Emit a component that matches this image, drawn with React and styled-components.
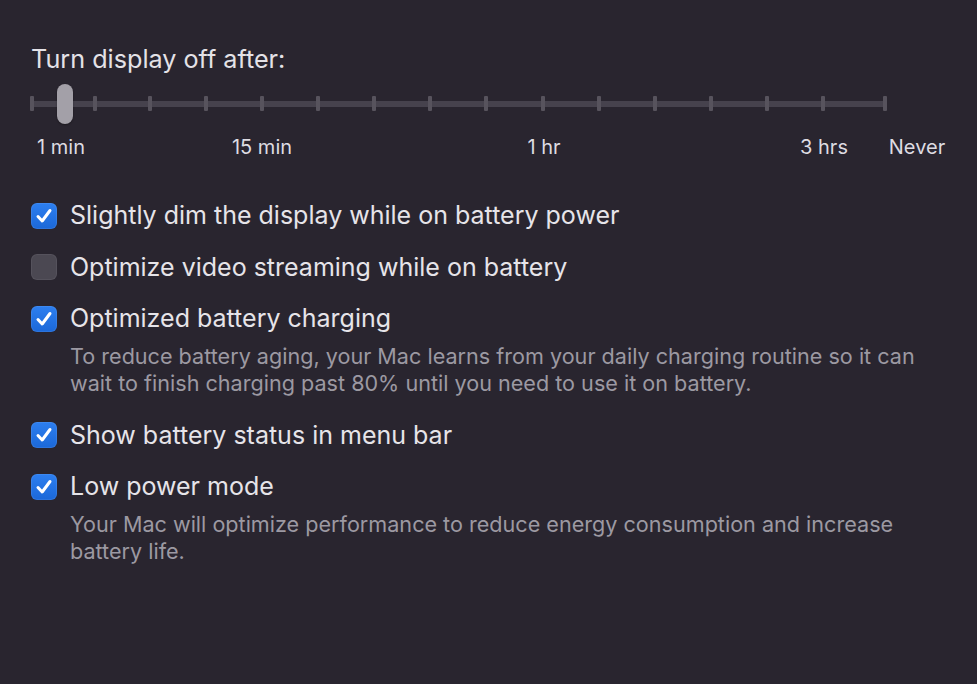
import React from "react";
import styled, { createGlobalStyle } from "styled-components";

const GlobalStyle = createGlobalStyle`
  html, body {
    margin: 0;
    padding: 0;
    background: #29252f;
  }
  body {
    font-family: Inter, "Noto Sans", "Liberation Sans", sans-serif;
    -webkit-font-smoothing: antialiased;
  }
`;

// tick positions along the slider rail
const TICKS = [32, 95, 150, 206, 262, 318, 374, 430, 486, 543, 599, 655, 711, 767, 823, 885];

const LABELS = [
  { text: "1 min", x: 61 },
  { text: "15 min", x: 262 },
  { text: "1 hr", x: 544 },
  { text: "3 hrs", x: 824 },
  { text: "Never", x: 917 },
];

const OPTIONS = [
  { label: "Slightly dim the display while on battery power", checked: true },
  { label: "Optimize video streaming while on battery", checked: false },
  {
    label: "Optimized battery charging",
    checked: true,
    note: "To reduce battery aging, your Mac learns from your daily charging routine so it can wait to finish charging past 80% until you need to use it on battery.",
  },
  { label: "Show battery status in menu bar", checked: true },
  {
    label: "Low power mode",
    checked: true,
    note: "Your Mac will optimize performance to reduce energy consumption and increase battery life.",
  },
];

const Page = styled.div`
  width: 977px;
  height: 684px;
  box-sizing: border-box;
  padding: 44px 0 0 31px;
  background: #29252f;
  overflow: hidden;
`;

const Title = styled.div`
  font-size: 25.2px;
  line-height: 30px;
  color: #e4e2e7;
`;

const Slider = styled.div`
  position: relative;
  margin-top: 10px;
  margin-left: -31px;
  height: 40px;
`;

const Rail = styled.div`
  position: absolute;
  left: 30px;
  width: 857px;
  top: 17px;
  height: 6px;
  border-radius: 3px;
  background: #46424d;
`;

const Tick = styled.div`
  position: absolute;
  top: 12px;
  width: 4px;
  height: 15px;
  margin-left: -2px;
  border-radius: 1px;
  background: #57535d;
`;

const Thumb = styled.div`
  position: absolute;
  top: 0;
  width: 16px;
  height: 40px;
  margin-left: -8px;
  border-radius: 8px;
  background: #a3a0a8;
  box-shadow: 0 1px 2px rgba(0, 0, 0, 0.35);
`;

const Scale = styled.div`
  position: relative;
  margin-left: -31px;
  height: 26px;
  margin-top: 10px;
`;

const ScaleLabel = styled.span`
  position: absolute;
  top: 0;
  transform: translateX(-50%);
  font-size: 20px;
  line-height: 26px;
  color: #dedce2;
  white-space: nowrap;
`;

const List = styled.div`
  display: flex;
  flex-direction: column;
  gap: 24.5px;
  margin-top: 42px;
`;

const Row = styled.label`
  display: flex;
  align-items: center;
  gap: 13px;
`;

const Box = styled.span`
  flex: none;
  width: 26px;
  height: 26px;
  box-sizing: border-box;
  border-radius: 6px;
  display: flex;
  align-items: center;
  justify-content: center;
  background: ${(p) =>
    p.$on ? "linear-gradient(#2d7ff0, #1b68d8)" : "#4b4852"};
  box-shadow: ${(p) =>
    p.$on ? "inset 0 0 0 1px rgba(255,255,255,0.08)" : "inset 0 0 0 1px rgba(255,255,255,0.06)"};
`;

const Label = styled.span`
  font-size: 25px;
  line-height: 27px;
  color: #e6e4e9;
`;

const Note = styled.p`
  margin: 11px 0 0 39px;
  max-width: 870px;
  font-size: 21.6px;
  line-height: 27px;
  color: #9c99a2;
`;

const Check = () => (
  <svg width="20" height="20" viewBox="0 0 20 20">
    <path
      d="M4 10.5 L8.2 15 L16 4.5"
      fill="none"
      stroke="#fff"
      strokeWidth="3"
      strokeLinecap="round"
      strokeLinejoin="round"
    />
  </svg>
);

const Option = ({ label, checked, note }) => (
  <div>
    <Row>
      <Box $on={checked}>{checked && <Check />}</Box>
      <Label>{label}</Label>
    </Row>
    {note && <Note>{note}</Note>}
  </div>
);

export default function App() {
  return (
    <Page>
      <GlobalStyle />
      <Title>Turn display off after:</Title>
      <Slider>
        <Rail />
        {TICKS.map((x) => (
          <Tick key={x} style={{ left: x }} />
        ))}
        <Thumb style={{ left: 65 }} />
      </Slider>
      <Scale>
        {LABELS.map((l) => (
          <ScaleLabel key={l.text} style={{ left: l.x }}>
            {l.text}
          </ScaleLabel>
        ))}
      </Scale>
      <List>
        {OPTIONS.map((o) => (
          <Option key={o.label} {...o} />
        ))}
      </List>
    </Page>
  );
}
